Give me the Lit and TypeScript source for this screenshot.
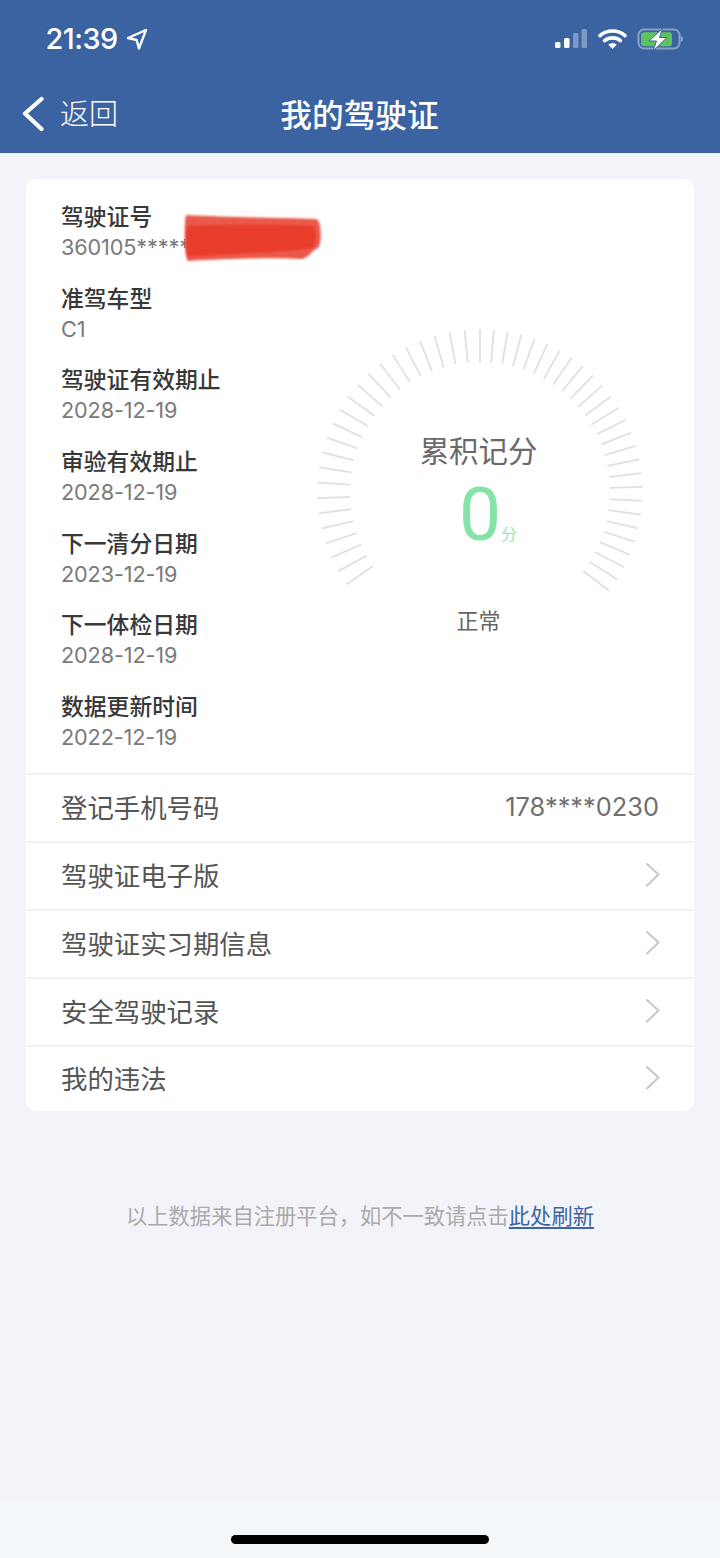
import { LitElement, html, css, svg } from "lit";
import { customElement } from "lit/decorators.js";

const details: [string, string][] = [
  ["驾驶证号", "360105*****"],
  ["准驾车型", "C1"],
  ["驾驶证有效期止", "2028-12-19"],
  ["审验有效期止", "2028-12-19"],
  ["下一清分日期", "2023-12-19"],
  ["下一体检日期", "2028-12-19"],
  ["数据更新时间", "2022-12-19"],
];

const links = ["驾驶证电子版", "驾驶证实习期信息", "安全驾驶记录", "我的违法"];

// Gauge ticks, in the gauge box's own coordinates: centre (170, 172)
const ticks = Array.from({ length: 50 }, (_, i) => {
  const k = i - 23;
  const deg = k < 0 ? k * 5.42 : k * 4.9;
  const a = (deg * Math.PI) / 180;
  const cx = 170, cy = 172, ro = 162.5, ri = 130;
  return [cx + ri * Math.sin(a), cy - ri * Math.cos(a), cx + ro * Math.sin(a), cy - ro * Math.cos(a)];
});

@customElement("app-root")
export class AppRoot extends LitElement {
  static styles = css`
    :host {
      width: 720px;
      height: 1558px;
      overflow: hidden;
      background: #f3f4f9;
      font-family: "Noto Sans CJK SC", "Noto Sans", sans-serif;
      display: flex;
      flex-direction: column;
    }
    .header { background: #3b63a1; height: 153px; color: #fff; flex: none; }
    .status { height: 78px; display: flex; align-items: center; padding: 0 37px 0 45.5px; }
    .time { font: 500 28.8px/78px Inter, "Liberation Sans", sans-serif; letter-spacing: -0.5px; }
    .loc { margin-left: 8.5px; }
    .status-right { margin-left: auto; display: flex; align-items: center; padding-top: 2px; }
    .nav { height: 75px; position: relative; display: flex; align-items: center; justify-content: center; }
    .back { position: absolute; left: 22px; top: 0; height: 72px; display: flex; align-items: center; gap: 16px; font-size: 29px; font-weight: 300; }
    .back span { padding-bottom: 4px; }
    .title { font-size: 31.7px; font-weight: 500; line-height: 66px; height: 72px; margin-left: -1px; }
    .main { flex: 1; }
    .card { background: #fff; border-radius: 10px; margin: 26px 26px 0; }
    .top { display: flex; padding: 23px 0 21px 35px; }
    .list { flex: 0 0 249px; display: flex; flex-direction: column; gap: 21.67px; }
    .item { position: relative; white-space: nowrap; }
    .lbl { font-size: 22.8px; line-height: 27px; height: 30px; font-weight: 500; color: #383838; }
    .val { font: 21.7px/30px Inter, "Liberation Sans", sans-serif; color: #7a7a7a; letter-spacing: -0.15px; }
    .blob { position: absolute; left: 121px; top: 10px; filter: blur(1px); }
    .gauge { position: relative; box-sizing: border-box; flex: 0 0 340px; height: 330px; margin-top: 118px; padding-right: 3px; display: flex; flex-direction: column; align-items: center; }
    .gauge svg { position: absolute; left: 0; top: 0; }
    .g-title { margin-top: 109px; font-size: 29.4px; line-height: 40px; color: #6a6a6a; }
    .g-score { position: relative; margin-top: 5px; font: 400 75px/80px Roboto, sans-serif; color: #86e3a6; margin-left: 3px; }
    .g-unit { position: absolute; left: 100%; top: 48px; margin-left: 0; font: 400 16px/22px "Noto Sans CJK SC", sans-serif; color: #9ce8b6; }
    .g-state { margin-top: 50px; font-size: 22px; line-height: 30px; color: #666; }
    .row { box-sizing: content-box; height: 64px; padding: 0 33px 2px 35px; border-top: 2px solid #f3f3f5; display: flex; align-items: center; justify-content: space-between; font-size: 26.4px; color: #555; }
    .row:last-child { height: 62px; }
    .row .num { font: 25.4px Inter, "Liberation Sans", sans-serif; color: #707070; margin-right: 2px; }
    .note { margin-top: 88px; text-align: center; font-size: 21.27px; line-height: 32px; color: #aaa; }
    .note a { color: #3c64a2; text-decoration: underline; text-underline-offset: 3px; }
    .home { height: 59px; flex: none; background: #f3f7f9; display: flex; justify-content: center; padding-top: 36px; box-sizing: border-box; }
    .bar { width: 258px; height: 9px; border-radius: 5px; background: #000; }
  `;

  private chevron() {
    return html`<svg width="16" height="26" viewBox="0 0 16 26" fill="none" stroke="#c6c6c6" stroke-width="2" stroke-linecap="round" stroke-linejoin="round"><path d="M2 2 L13.5 12.5 L2 23.5" /></svg>`;
  }

  render() {
    return html`
      <div class="header">
        <div class="status">
          <span class="time">21:39</span>
          <svg class="loc" width="22" height="22" viewBox="0 0 22 22" fill="none" stroke="#fff" stroke-width="2.4" stroke-linejoin="round"><path d="M20 2 L2 10 L10.6 12 L13 20.4 Z" /></svg>
          <div class="status-right">
            <svg width="128" height="24" viewBox="0 0 128 24" fill="none">
              <rect x="0" y="14" width="5.5" height="6" rx="1.5" fill="#fff" />
              <rect x="9" y="10" width="5.5" height="10" rx="1.5" fill="#fff" />
              <rect x="18" y="5" width="5.5" height="15" rx="1.5" fill="#fff" fill-opacity=".35" />
              <rect x="26.5" y="1" width="5.5" height="19" rx="1.5" fill="#fff" fill-opacity=".35" />
              <g stroke="#fff" stroke-width="3.6" stroke-linecap="round">
                <path d="M45 7.6 C52 1.4 63 1.4 70 7.6" />
                <path d="M49.6 12.6 C54 9 61 9 65.4 12.6" />
              </g>
              <path d="M53.2 16.4 C56 14.4 59 14.4 61.8 16.4 L57.5 21 Z" fill="#fff" />
              <rect x="83.5" y="1.5" width="41" height="19" rx="5.5" stroke="#fff" stroke-opacity=".4" stroke-width="2" />
              <rect x="86" y="4.3" width="31" height="14" rx="3" fill="#5fc25e" />
              <path d="M125.8 8 C127.4 8.6 128 10 128 11 C128 12 127.4 13.4 125.8 14 Z" fill="#fff" fill-opacity=".4" />
              <path d="M107.5 0.5 L94 13 L101.5 13 L98 23 L112 9.5 L104.5 9.5 Z" fill="#fff" stroke="#3b63a1" stroke-width="1" />
            </svg>
          </div>
        </div>
        <div class="nav">
          <div class="back">
            <svg width="22" height="36" viewBox="0 0 22 36" fill="none" stroke="#fff" stroke-width="4.2" stroke-linecap="round" stroke-linejoin="round"><path d="M19.5 3 L3 17.5 L19.5 33" /></svg>
            <span>返回</span>
          </div>
          <div class="title">我的驾驶证</div>
        </div>
      </div>
      <div class="main">
        <div class="card">
          <div class="top">
            <div class="list">
              ${details.map(([l, v], i) => html`
                <div class="item">
                  <div class="lbl">${l}</div>
                  <div class="val">${v}</div>
                  ${i === 0 ? html`<svg class="blob" width="142" height="52" viewBox="0 0 142 52">
                    <path d="M4 3 C40 5 100 6 134 7 C140 8 140 32 136 36 C130 38 128 45 120 47 C90 45 40 47 6 49 C2 47 2 10 4 3 Z" fill="#ea5a4a" />
                    <path d="M5 14 C50 12 100 12 132 14 C135 20 135 32 130 36 C100 41 40 42 6 45 C3 40 3 20 5 14 Z" fill="#e93d2c" />
                  </svg>` : ""}
                </div>`)}
            </div>
            <div class="gauge">
              <svg width="340" height="330" viewBox="0 0 340 330" stroke="#e0e0e0" stroke-width="1.8">
                ${ticks.map(([x1, y1, x2, y2]) => svg`<line x1=${x1} y1=${y1} x2=${x2} y2=${y2} />`)}
              </svg>
              <div class="g-title">累积记分</div>
              <div class="g-score">0<span class="g-unit">分</span></div>
              <div class="g-state">正常</div>
            </div>
          </div>
          <div class="row"><span>登记手机号码</span><span class="num">178****0230</span></div>
          ${links.map((t) => html`<div class="row"><span>${t}</span>${this.chevron()}</div>`)}
        </div>
        <div class="note">以上数据来自注册平台，如不一致请点击<a>此处刷新</a></div>
      </div>
      <div class="home"><div class="bar"></div></div>
    `;
  }
}
